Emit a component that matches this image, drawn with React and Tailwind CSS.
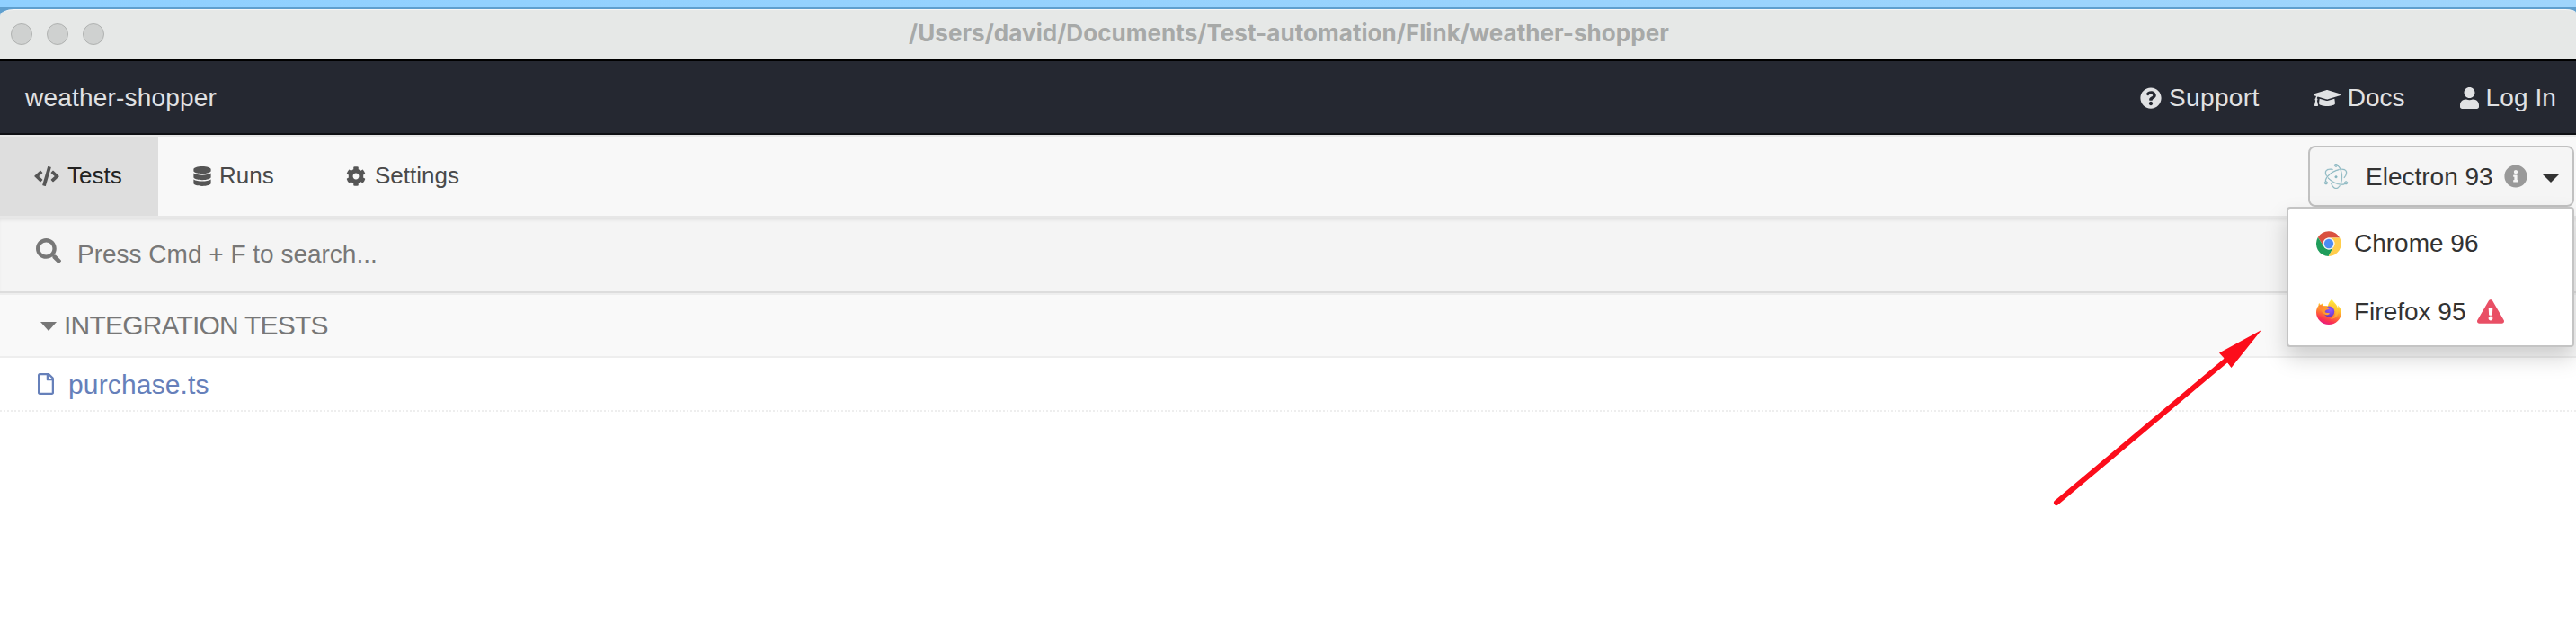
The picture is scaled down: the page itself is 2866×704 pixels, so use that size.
import { FaCode, FaDatabase, FaCog, FaSearch, FaRegFile, FaQuestionCircle, FaGraduationCap, FaUser, FaInfoCircle, FaExclamationTriangle } from "react-icons/fa";
import { SiElectron } from "react-icons/si";

function ChromeLogo() {
  return (
    <svg viewBox="0 0 48 48" className="h-7 w-7 shrink-0">
      <circle cx="24" cy="24" r="24" fill="#fff" />
      <path d="M24 13H44.9A24 24 0 0 0 3.2 12L14.5 29.5A11 11 0 0 1 24 13Z" fill="#d9503f" />
      <path d="M14.5 29.5L3.2 12A24 24 0 0 0 23.5 48L33.5 29.5A11 11 0 0 1 14.5 29.5Z" fill="#1f9d5b" />
      <path d="M33.5 29.5L23.5 48A24 24 0 0 0 44.9 13H24A11 11 0 0 1 33.5 29.5Z" fill="#ffcd4b" />
      <circle cx="24" cy="24" r="11" fill="#f1f1f1" />
      <circle cx="24" cy="24" r="8.8" fill="#4b8bf4" />
    </svg>
  );
}

function FirefoxLogo() {
  return (
    <svg viewBox="0 0 56 58" className="h-[29px] w-7 shrink-0">
      <defs>
        <linearGradient id="ffBody" x1="0.75" y1="0.05" x2="0.4" y2="1">
          <stop offset="0" stopColor="#fff14a" />
          <stop offset="0.35" stopColor="#ffc02e" />
          <stop offset="0.65" stopColor="#ff6a36" />
          <stop offset="0.85" stopColor="#fb2f52" />
          <stop offset="1" stopColor="#e81d80" />
        </linearGradient>
        <radialGradient id="ffGlobe" cx="0.6" cy="0.35" r="0.7">
          <stop offset="0" stopColor="#9059ff" />
          <stop offset="0.6" stopColor="#7a45dd" />
          <stop offset="1" stopColor="#6135b5" />
        </radialGradient>
        <linearGradient id="ffHead" x1="0" y1="0" x2="1" y2="0.6">
          <stop offset="0" stopColor="#ff7a3a" />
          <stop offset="1" stopColor="#ffa62b" />
        </linearGradient>
      </defs>
      <path d="M35 1C37 7 43 10 46 16C47 18 47.500 20 48 21C49 19 48.500 17 48 15C53 20 56 26 56 31C56 46 43.500 58 28 58C12.500 58 0 46 0 31C0 25 1.500 20 5 16C5 14 5 12 6.500 9.500C7 11 8 13 9.500 14C11 12.500 13 11.500 14 11C13.800 13 15 15.500 17 16.500C20 16 23 16 26 17C26.500 11 30 5 35 1Z" fill="url(#ffBody)" />
      <circle cx="28.500" cy="29" r="12" fill="url(#ffGlobe)" />
      <path d="M5 16C10 13 14 15 17 17C21 17.500 25 18 29 22C28 24.500 24 25 22 25.500C20 27 20.500 29 19 30C23 33 27 31 30 33C28 37 21 38 17 34C11 29 9 22 5 16Z" fill="url(#ffHead)" />
      <path d="M29 16C39 15 43 23 43 30C43 38 38 44 29 45C41 47 50 39 49 28C48 19 42 13 36 9C39 14 34 15 29 16Z" fill="#ffca35" opacity="0.5" />
    </svg>
  );
}

function Caret({ className }) {
  return (
    <svg viewBox="0 0 20 10" preserveAspectRatio="none" className={className}>
      <path d="M0 0H20L10 10Z" fill="currentColor" />
    </svg>
  );
}

function TitleBar() {
  return (
    <div className="h-[66px] bg-linear-to-r from-[#8fd0ff] to-[#9fd5fc] pt-2">
      <div className="h-[58px] bg-[#5f9fce] pt-0.5">
        <div className="relative flex h-14 items-center justify-center rounded-tl-[16px_8px] rounded-tr-[12px_4px] border-t border-[#f6f7f7] bg-[#e6e8e7] pb-[3px]">
          <div className="absolute left-3 top-[15px] flex gap-4">
            <span className="size-6 rounded-full border border-[#b0b2b1] bg-[#cfd1d0]" />
            <span className="size-6 rounded-full border border-[#b0b2b1] bg-[#cfd1d0]" />
            <span className="size-6 rounded-full border border-[#b0b2b1] bg-[#cfd1d0]" />
          </div>
          <span className="pl-0.5 font-['Inter'] text-[26px] font-bold tracking-[0.05px] text-[#a7a9a8]">/Users/david/Documents/Test-automation/Flink/weather-shopper</span>
        </div>
      </div>
    </div>
  );
}

function NavBar() {
  return (
    <nav className="flex h-[84px] items-center justify-between border-y-2 border-t-black border-b-[#0f1014] bg-[#252831] pt-0.5 pr-[22px] pl-7 text-[28px] text-[#e0e1e3]">
      <span className="tracking-[0.2px]">weather-shopper</span>
      <div className="flex items-center">
        <a className="mr-[60px] flex items-center gap-2 tracking-[0.4px]"><FaQuestionCircle className="size-6" />Support</a>
        <a className="mr-[61px] flex items-center gap-2"><FaGraduationCap className="h-6 w-[30px]" />Docs</a>
        <a className="flex items-center gap-2 tracking-[0.1px]"><FaUser className="h-6 w-[21px]" />Log In</a>
      </div>
    </nav>
  );
}

function BrowserPicker() {
  return (
    <div className="relative h-[68px] w-[296px] text-[28px] text-[#333]">
      <button className="flex h-[68px] w-full items-center rounded-lg border-2 border-[#c1c1c1] bg-[#f5f5f5] pl-[15px]">
        <SiElectron className="mr-[19px] size-7 stroke-current stroke-[0.35] text-[#86b4bf]" />
        <span className="pt-px">Electron 93</span>
        <FaInfoCircle className="ml-3 size-[26px] text-[#999]" />
        <Caret className="mt-1 ml-4 h-2.5 w-5" />
      </button>
      <ul className="absolute top-[68px] right-0 z-10 h-[156px] w-80 rounded border-2 border-[#c4c4c4] bg-white shadow-[0_12px_24px_rgba(0,0,0,0.175)]">
        <li className="flex h-[76px] items-center gap-3.5 pt-px pl-[31px]"><ChromeLogo />Chrome 96</li>
        <li className="flex h-[76px] items-center gap-3.5 pt-px pl-[31px]"><FirefoxLogo />Firefox 95<FaExclamationTriangle className="-ml-0.5 h-[27px] w-[30px] text-[#e94f65]" /></li>
      </ul>
    </div>
  );
}

function TabBar() {
  return (
    <div className="flex h-[92px] justify-between border-t-2 border-b-2 border-[#e7e7e7] bg-[#f8f8f8] pr-0.5 text-[26px] text-[#4a4a4a]">
      <div className="flex">
        <a className="flex w-44 items-center gap-[9px] bg-[#dedede] pb-[3px] pl-[38px] text-[#222]"><FaCode className="mt-[3px] h-[22px] w-7 text-[#555]" />Tests</a>
        <a className="flex w-[169px] items-center gap-[9px] pb-[3px] pl-[39px]"><FaDatabase className="mt-[3px] h-[22px] w-5 text-[#555]" />Runs</a>
        <a className="flex items-center gap-2.5 pb-[3px] pl-10"><FaCog className="mt-[3px] size-[22px] text-[#555]" />Settings</a>
      </div>
      <div className="pt-2.5"><BrowserPicker /></div>
    </div>
  );
}

function Arrow() {
  return (
    <svg viewBox="0 0 240 204" className="pointer-events-none absolute top-[363px] left-[2280px] z-20 h-[204px] w-[240px]">
      <path d="M8 196L200 35" stroke="#fc0d1b" strokeWidth="6" strokeLinecap="round" />
      <path d="M236 4L189 29.500L197 38L202.500 46Z" fill="#fc0d1b" />
      <path d="M189 29.500L194 35.500L199 34L202.500 45.500Z" fill="#fc0d1b" />
    </svg>
  );
}

export default function App() {
  return (
    <div className="relative h-[704px] w-[2866px] overflow-hidden bg-white font-['Liberation_Sans',sans-serif] leading-none whitespace-nowrap">
      <TitleBar />
      <NavBar />
      <TabBar />
      <div className="flex h-[84px] items-center border-b-2 border-[#ddd] bg-[#f4f4f4] pl-10 text-[28px] text-[#777] shadow-[inset_0_4px_4px_-2px_rgba(0,0,0,0.1)]">
        <FaSearch className="mr-[18px] mb-2 size-7" />
        <span>Press Cmd + F to search...</span>
      </div>
      <div className="flex h-[72px] items-center border-t-2 border-b-2 border-[#eee] bg-[#f9f9f9] pl-[45px] text-[30px] text-[#777]">
        <Caret className="mt-0.5 mr-2 h-2.5 w-[18px]" />
        <span className="tracking-[-0.8px]">INTEGRATION TESTS</span>
      </div>
      <div className="flex h-[60px] items-center border-b-2 border-dotted border-[#eee] pl-[42px] text-[30px] text-[#6680ba]">
        <FaRegFile className="mr-4 h-6 w-[18px]" />
        <span className="pt-0.5 tracking-[0.15px]">purchase.ts</span>
      </div>
      <Arrow />
    </div>
  );
}
